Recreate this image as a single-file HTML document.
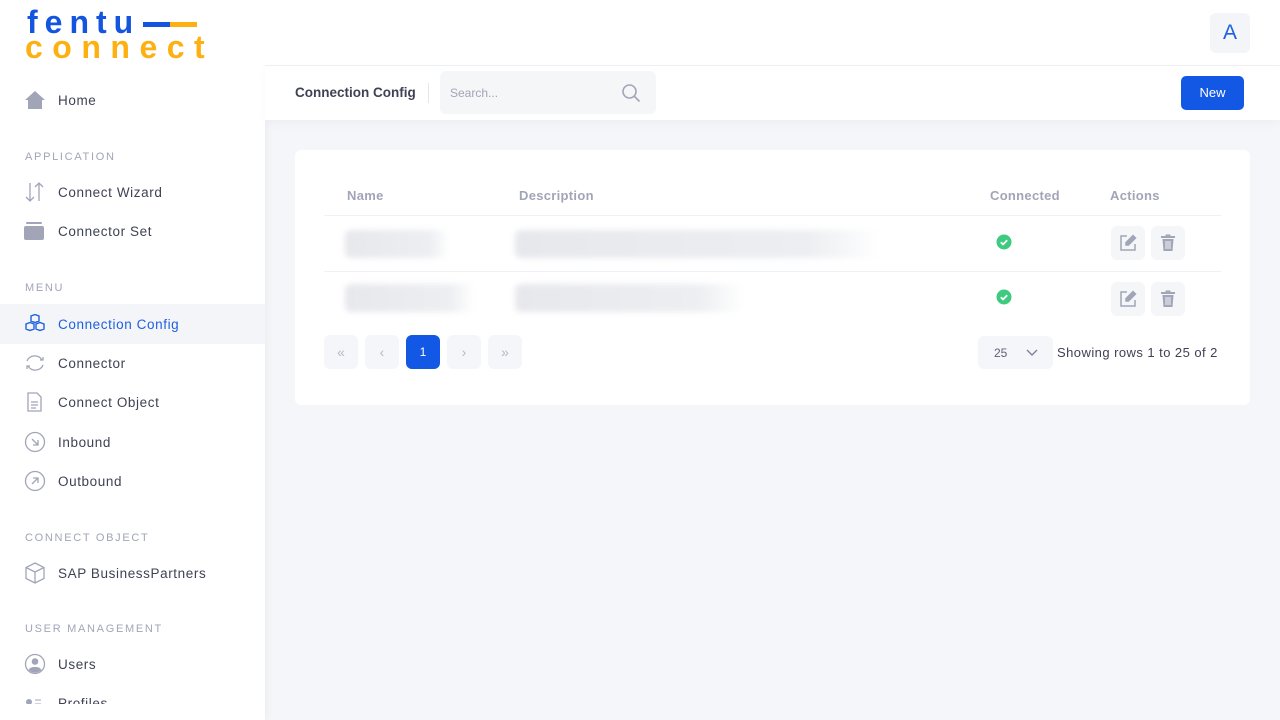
<!DOCTYPE html>
<html><head><meta charset="utf-8"><style>
*{box-sizing:border-box;margin:0;padding:0}
body{width:1280px;height:720px;overflow:hidden;font-family:"Liberation Sans",sans-serif;background:#f5f6f9;position:relative;color:#3f4254}
.side{position:absolute;left:0;top:0;width:265px;height:720px;background:#fff;box-shadow:2px 0 8px rgba(0,0,0,.04)}
.logo{position:absolute;left:27px;top:10px;font-weight:bold;font-size:32px;line-height:25px}
.logo .a{color:#1455e0;letter-spacing:7px}.logo .b{color:#fdb012;letter-spacing:9.5px;margin-left:-2px}
.item{position:absolute;left:0;width:265px;height:40px;display:flex;align-items:center;font-size:13.5px;letter-spacing:.6px;color:#3f4254}
.item svg{position:absolute;left:24px}
.item span{position:absolute;left:58px}
.item.active{background:#f4f5f8;color:#1e5fe0}
.sec{position:absolute;left:25px;font-size:11px;letter-spacing:1.7px;color:#a1a5b7}
.top{position:absolute;left:265px;top:0;right:0;height:66px;background:#fff;border-bottom:1px solid #eef0f4}
.av{position:absolute;right:30px;top:13px;width:40px;height:40px;background:#f3f5f9;border-radius:6px;color:#1e5fe0;font-size:21px;text-align:center;line-height:40px}
.sub{position:absolute;left:265px;top:66px;right:0;height:54px;background:#fff;box-shadow:0 4px 10px rgba(0,0,0,.03)}
.card{position:absolute;left:295px;top:150px;width:955px;height:255px;background:#fff;border-radius:6px}
.th{position:absolute;top:188px;font-size:13px;letter-spacing:.3px;color:#a1a5b7;font-weight:bold}
.blur{position:absolute;height:28px;background:linear-gradient(90deg,#e7e8ec,#eceef1 80%,rgba(255,255,255,0));filter:blur(3px);border-radius:6px}
.btn{position:absolute;width:34px;height:34px;background:#f5f6f8;border-radius:6px}
.btn svg{position:absolute;left:8px;top:8px}
.pg{position:absolute;top:335px;width:34px;height:34px;background:#f5f6f9;border-radius:6px;color:#b5b8c6;text-align:center;line-height:34px;font-size:14px}
</style></head><body>
<div class="side">
 <div class="logo"><div class="a">fentu<span style="display:inline-block;width:54px;height:5px;background:linear-gradient(90deg,#1455e0 50%,#fdb012 50%);vertical-align:middle;margin-left:3px"></span></div><div class="b">connect</div></div>
 <div class="item" style="top:80px"><svg width="22" height="20" viewBox="0 0 22 20"><path d="M11 1L1 10h3v9h14v-9h3z" fill="#a1a5b7"/></svg><span>Home</span></div>
 <div class="sec" style="top:151px">APPLICATION</div>
 <div class="item" style="top:172px"><svg width="22" height="20" viewBox="0 0 22 20" fill="none" stroke="#a1a5b7" stroke-width="1.3"><path d="M6 1v18M2 15l4 4 4-4M15 19V1M11 5l4-4 4 4"/></svg><span>Connect Wizard</span></div>
 <div class="item" style="top:211px"><svg width="22" height="20" viewBox="0 0 22 20"><rect x="2" y="1" width="16" height="2" rx="1" fill="#a1a5b7"/><rect x="0" y="5" width="20" height="14" rx="2" fill="#a1a5b7"/></svg><span>Connector Set</span></div>
 <div class="sec" style="top:282px">MENU</div>
 <div class="item active" style="top:304px"><svg width="22" height="20" viewBox="0 0 22 20" fill="none" stroke="#1e5fe0" stroke-width="1.4"><path d="M7 2l4-1.5 4 1.5v5l-4 1.5-4-1.5zM2 10l4-1.5 4 1.5v5l-4 1.5-4-1.5zM12 10l4-1.5 4 1.5v5l-4 1.5-4-1.5z"/></svg><span>Connection Config</span></div>
 <div class="item" style="top:343px"><svg width="22" height="20" viewBox="0 0 22 20" fill="none" stroke="#a1a5b7" stroke-width="1.3"><path d="M3 8a8 7 0 0 1 15-1M19 12a8 7 0 0 1-15 1"/><path d="M16 7h3V4M6 13H3v3"/></svg><span>Connector</span></div>
 <div class="item" style="top:382px"><svg width="22" height="20" viewBox="0 0 22 20" fill="none" stroke="#a1a5b7" stroke-width="1.3"><path d="M4 1h9l4 4v14H4zM7 10h7M7 13h7M7 16h5"/></svg><span>Connect Object</span></div>
 <div class="item" style="top:422px"><svg width="22" height="22" viewBox="0 0 22 22" fill="none" stroke="#a1a5b7" stroke-width="1.3"><circle cx="11" cy="11" r="9.5"/><path d="M8 8l6 6M9 14h5V9"/></svg><span>Inbound</span></div>
 <div class="item" style="top:461px"><svg width="22" height="22" viewBox="0 0 22 22" fill="none" stroke="#a1a5b7" stroke-width="1.3"><circle cx="11" cy="11" r="9.5"/><path d="M8 14l6-6M9 8h5v5"/></svg><span>Outbound</span></div>
 <div class="sec" style="top:532px">CONNECT OBJECT</div>
 <div class="item" style="top:553px"><svg width="22" height="22" viewBox="0 0 22 22" fill="none" stroke="#a1a5b7" stroke-width="1.3"><path d="M11 1l9 4.5v11L11 21l-9-4.5v-11zM2 5.5L11 10l9-4.5M11 10v11"/></svg><span>SAP BusinessPartners</span></div>
 <div class="sec" style="top:623px">USER MANAGEMENT</div>
 <div class="item" style="top:644px"><svg width="22" height="22" viewBox="0 0 22 22"><circle cx="11" cy="11" r="9.5" fill="none" stroke="#a1a5b7" stroke-width="1.3"/><circle cx="11" cy="8.5" r="3.3" fill="#a1a5b7"/><path d="M4.5 17a7 5 0 0 1 13 0a9 9 0 0 1-13 0z" fill="#a1a5b7"/></svg><span>Users</span></div>
 <div class="item" style="top:684px;height:20px;overflow:hidden;align-items:flex-start"><svg width="22" height="12" viewBox="0 0 22 12" style="top:13px"><circle cx="5" cy="5" r="3" fill="#a1a5b7"/><path d="M11 3h6M11 7h6" stroke="#a1a5b7"/></svg><span style="top:12px">Profiles</span></div>
</div>
<div class="top"><div class="av">A</div></div>
<div class="sub">
 <div style="position:absolute;left:30px;top:19px;font-size:13.5px;font-weight:bold;color:#3f4254">Connection Config</div>
 <div style="position:absolute;left:163px;top:17px;width:1px;height:20px;background:#e4e6ef"></div>
 <div style="position:absolute;left:175px;top:5px;width:216px;height:43px;background:#f5f6f8;border-radius:6px">
  <span style="position:absolute;left:10px;top:15px;font-size:12px;color:#a1a5b7">Search...</span>
  <svg width="20" height="20" viewBox="0 0 20 20" style="position:absolute;right:15px;top:12px" fill="none" stroke="#a1a5b7" stroke-width="1.6"><circle cx="8.5" cy="8.5" r="6.5"/><path d="M13.5 13.5l5 5"/></svg>
 </div>
 <div style="position:absolute;right:36px;top:10px;width:63px;height:34px;background:#1358e4;border-radius:5px;color:#fff;font-size:13px;text-align:center;line-height:34px">New</div>
</div>
<div class="card"></div>
<div class="th" style="left:347px">Name</div>
<div class="th" style="left:519px">Description</div>
<div class="th" style="left:990px">Connected</div>
<div class="th" style="left:1110px">Actions</div>
<div style="position:absolute;left:324px;top:215px;width:897px;height:1px;background:#eff1f4"></div>
<div style="position:absolute;left:324px;top:271px;width:897px;height:1px;background:#eff1f4"></div>
<div class="blur" style="left:345px;top:230px;width:105px"></div>
<div class="blur" style="left:515px;top:230px;width:365px"></div>
<div class="blur" style="left:345px;top:284px;width:130px"></div>
<div class="blur" style="left:515px;top:284px;width:228px"></div>
<svg width="16" height="16" style="position:absolute;left:996px;top:234px"><circle cx="8" cy="8" r="7.5" fill="#3ecb7f"/><path d="M4.8 8.2l2.2 2.2 4.2-4.2" fill="none" stroke="#fff" stroke-width="1.8"/></svg>
<svg width="16" height="16" style="position:absolute;left:996px;top:289px"><circle cx="8" cy="8" r="7.5" fill="#3ecb7f"/><path d="M4.8 8.2l2.2 2.2 4.2-4.2" fill="none" stroke="#fff" stroke-width="1.8"/></svg>
<div class="btn" style="left:1111px;top:226px"><svg width="18" height="18" viewBox="0 0 18 18" fill="none" stroke="#a1a5b7" stroke-width="1.5"><path d="M8 2H2v14h14v-6"/><path d="M14 1.5l2.5 2.5-7 7H7V8.5z" fill="#a1a5b7"/></svg></div>
<div class="btn" style="left:1151px;top:226px"><svg width="18" height="18" viewBox="0 0 18 18"><rect x="2" y="2" width="14" height="2" fill="#a1a5b7"/><rect x="6.5" y="0.5" width="5" height="2" fill="#a1a5b7"/><path d="M3.5 5h11l-1 12h-9z" fill="#a1a5b7"/><path d="M7 7v8M9 7v8M11 7v8" stroke="#f5f6f8" stroke-width="1"/></svg></div>
<div class="btn" style="left:1111px;top:282px"><svg width="18" height="18" viewBox="0 0 18 18" fill="none" stroke="#a1a5b7" stroke-width="1.5"><path d="M8 2H2v14h14v-6"/><path d="M14 1.5l2.5 2.5-7 7H7V8.5z" fill="#a1a5b7"/></svg></div>
<div class="btn" style="left:1151px;top:282px"><svg width="18" height="18" viewBox="0 0 18 18"><rect x="2" y="2" width="14" height="2" fill="#a1a5b7"/><rect x="6.5" y="0.5" width="5" height="2" fill="#a1a5b7"/><path d="M3.5 5h11l-1 12h-9z" fill="#a1a5b7"/><path d="M7 7v8M9 7v8M11 7v8" stroke="#f5f6f8" stroke-width="1"/></svg></div>
<div class="pg" style="left:324px">«</div>
<div class="pg" style="left:365px">‹</div>
<div class="pg" style="left:406px;background:#1358e4;color:#fff;font-size:12px">1</div>
<div class="pg" style="left:447px">›</div>
<div class="pg" style="left:488px">»</div>
<div style="position:absolute;left:978px;top:336px;width:75px;height:33px;background:#f5f6f9;border-radius:6px;font-size:12px;color:#5e6278">
 <span style="position:absolute;left:16px;top:10px">25</span>
 <svg width="12" height="8" style="position:absolute;left:48px;top:13px" fill="none" stroke="#7e8299" stroke-width="1.4"><path d="M1 1l5 5 5-5"/></svg>
</div>
<div style="position:absolute;left:1057px;top:345px;font-size:13px;letter-spacing:.45px;color:#3f4254">Showing rows 1 to 25 of 2</div>
</body></html>
